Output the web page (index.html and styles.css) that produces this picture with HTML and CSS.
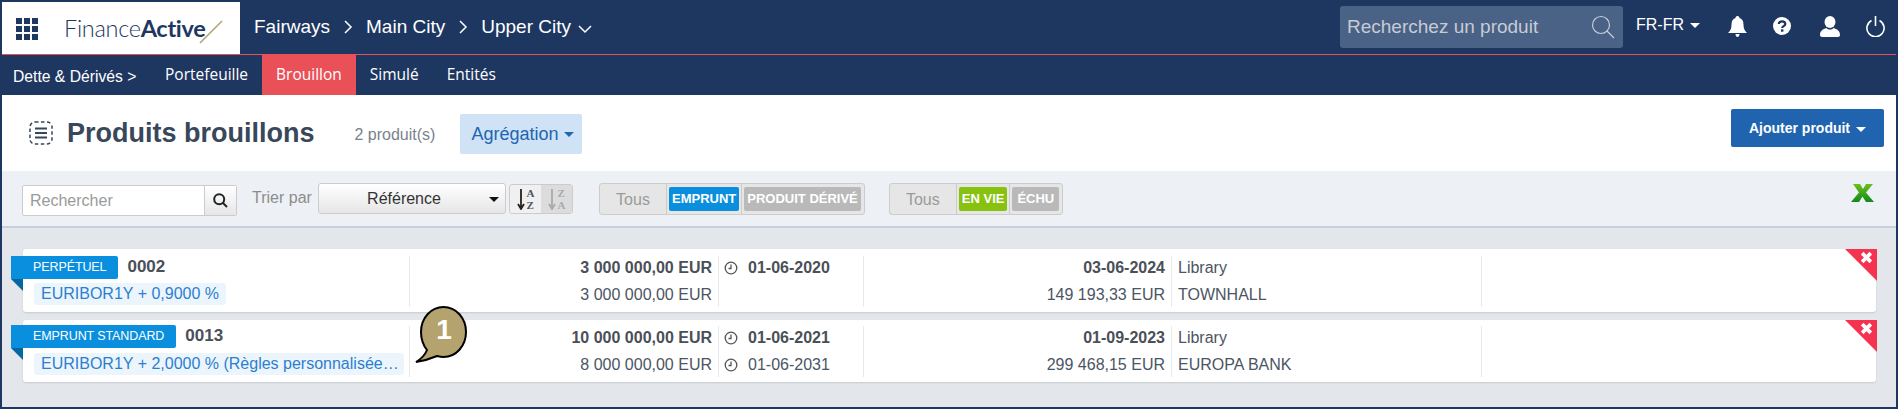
FILE: index.html
```html
<!DOCTYPE html>
<html lang="fr">

<head>
  <meta charset="UTF-8">
  <meta name="viewport" content="width=device-width, initial-scale=1.0">
  <title>Produits brouillons</title>

  <link rel="stylesheet" href="styles.css">
</head>

<body>
  <div class="page">
    <header class="topbar">
      <div class="brand">
        <svg class="apps" width="22" height="22" viewBox="0 0 22 22" fill="#1e3761">
          <rect x="0" y="0" width="6" height="6" /><rect x="8" y="0" width="6" height="6" /><rect x="16" y="0" width="6" height="6" />
          <rect x="0" y="8" width="6" height="6" /><rect x="8" y="8" width="6" height="6" /><rect x="16" y="8" width="6" height="6" />
          <rect x="0" y="16" width="6" height="6" /><rect x="8" y="16" width="6" height="6" /><rect x="16" y="16" width="6" height="6" />
        </svg>
        <span class="logo">Finance<b>Active</b></span>
        <svg class="slash" width="24" height="24" viewBox="0 0 24 24"><path d="M1 23 L23 1" stroke="#b3a273" stroke-width="1.6" /></svg>
      </div>

      <nav class="crumbs">
        <span>Fairways</span>
        <svg width="10" height="16" viewBox="0 0 10 16"><path d="M2 2 L8 8 L2 14" class="line" /></svg>
        <span>Main City</span>
        <svg width="10" height="16" viewBox="0 0 10 16"><path d="M2 2 L8 8 L2 14" class="line" /></svg>
        <span>Upper City</span>
        <svg class="down" width="16" height="10" viewBox="0 0 16 10"><path d="M2 2 L8 8 L14 2" class="line" /></svg>
      </nav>

      <div class="top-right">
        <div class="top-search">
          <span>Recherchez un produit</span>
          <svg width="24" height="24" viewBox="0 0 24 24" fill="none" stroke="#c4ccd8" stroke-width="1.2">
            <circle cx="10" cy="10" r="8.5" /><path d="M16 16 L23 23" />
          </svg>
        </div>
        <div class="lang">FR-FR<i class="caret"></i></div>
        <div class="top-icons">
          <svg width="19" height="21" viewBox="0 0 19 21" fill="#fff">
            <path d="M9.5 0 C11 0 11.5 1 11.5 2 C14.5 3 15.5 5.5 15.5 9 C15.5 13 17 15 19 17 L0 17 C2 15 3.5 13 3.5 9 C3.5 5.5 4.500 3 7.500 2 C7.500 1 8 0 9.500 0 Z" />
            <path d="M7.500 18 L11.500 18 C11.500 20 10.500 21 9.500 21 C8.500 21 7.500 20 7.500 18 Z" />
          </svg>
          <svg width="18" height="18" viewBox="0 0 18 18">
            <circle cx="9" cy="9" r="9" fill="#fff" />
            <path d="M5.800 7 C5.800 3.400 12.300 3.400 12.300 7 C12.300 9.300 9.200 9 9.200 11" fill="none" stroke="#1e3761" stroke-width="2.200" />
            <rect x="8" y="12.300" width="2.400" height="2.400" fill="#1e3761" />
          </svg>
          <svg width="20" height="21" viewBox="0 0 20 21" fill="#fff">
            <ellipse cx="10" cy="6" rx="5.500" ry="6" />
            <path d="M6.500 12 C8 14 12 14 13.500 12 C17 13 20 15 20 19 C20 20 19 21 18 21 L2 21 C1 21 0 20 0 19 C0 15 3 13 6.500 12 Z" />
          </svg>
          <svg width="19" height="21" viewBox="0 0 19 21" fill="none" stroke="#fff" stroke-width="1.600">
            <path d="M5.500 4.500 A8.600 8.600 0 1 0 13.500 4.500" /><path d="M9.500 0 L9.500 10" />
          </svg>
        </div>
      </div>
    </header>

    <nav class="subnav">
      <span class="subnav-title">Dette &amp; Dérivés &gt;</span>
      <a>Portefeuille</a>
      <a class="active">Brouillon</a>
      <a>Simulé</a>
      <a>Entités</a>
    </nav>

    <section class="heading">
      <svg class="draft" width="24" height="24" viewBox="0 0 24 24" fill="none" stroke="#39475a">
        <rect x="1" y="1" width="22" height="22" rx="5" stroke-width="1.500" stroke-dasharray="3.500 2.500" />
        <path d="M6 7.500 H18 M6 12 H18 M6 16.500 H18" stroke-width="2" />
      </svg>
      <h1>Produits brouillons</h1>
      <span class="count">2 produit(s)</span>
      <button class="aggregate">Agrégation<i class="caret"></i></button>
      <button class="add">Ajouter produit<i class="caret"></i></button>
    </section>

    <section class="toolbar">
      <div class="find">
        <span class="find-input">Rechercher</span>
        <span class="find-btn">
          <svg width="15" height="15" viewBox="0 0 15 15" fill="none" stroke="#222" stroke-width="2">
            <circle cx="6.200" cy="6.200" r="5" /><path d="M10 10 L14 14" />
          </svg>
        </span>
      </div>
      <span class="sort-label">Trier par</span>
      <div class="select">Référence<i class="caret dark"></i></div>
      <div class="sort-btns">
        <span class="sort">
          <svg width="8" height="22" viewBox="0 0 8 22"><path d="M4 1 V20 M1 16 L4 21 L7 16" fill="none" stroke="#222" stroke-width="1.800" /></svg>
          <span class="az"><span>A</span><span>Z</span></span>
        </span>
        <span class="sort off">
          <svg width="8" height="22" viewBox="0 0 8 22"><path d="M4 1 V20 M1 16 L4 21 L7 16" fill="none" stroke="#aaa" stroke-width="1.800" /></svg>
          <span class="az"><span>Z</span><span>A</span></span>
        </span>
      </div>
      <div class="filter first">
        <span class="all">Tous</span>
        <span class="opt"><b class="pill blue">EMPRUNT</b></span>
        <span class="opt"><b class="pill grey">PRODUIT DÉRIVÉ</b></span>
      </div>
      <div class="filter">
        <span class="all">Tous</span>
        <span class="opt"><b class="pill green">EN VIE</b></span>
        <span class="opt"><b class="pill grey echu">ÉCHU</b></span>
      </div>
      <svg class="excel" width="23" height="18" viewBox="0 0 23 18">
        <defs>
          <linearGradient id="xl" x1="0" y1="0" x2="0" y2="1">
            <stop offset="0" stop-color="#6cc11a" />
            <stop offset="1" stop-color="#0f8a1c" />
          </linearGradient>
        </defs>
        <path d="M2 0 H9 L12 5 L15 0 H22 L15 8.500 L23 18 H15 L11.500 12.500 L8 18 H0 L8 8.500 Z" fill="url(#xl)" />
      </svg>
    </section>

    <main class="list">
      <article class="card">
        <i class="remove"></i>
        <svg class="remove-x" width="13" height="13" viewBox="0 0 12 12"><path d="M2 2 L10 10 M10 2 L2 10" stroke="#fff" stroke-width="3.400" /></svg>
        <div class="col col-main">
          <div class="tag-row">
            <span class="tag">PERPÉTUEL</span>
            <strong class="ref">0002</strong>
          </div>
          <span class="rate">EURIBOR1Y + 0,9000 %</span>
        </div>
        <div class="col col-num">
          <strong>3 000 000,00 EUR</strong>
          <span>3 000 000,00 EUR</span>
        </div>
        <div class="col col-date">
          <strong class="date">
            <svg class="clock" width="14" height="14" viewBox="0 0 14 14"><circle cx="7" cy="7" r="5.800" /><path d="M7 3.500 V7.500 H4.500" /></svg>
            01-06-2020
          </strong>
        </div>
        <div class="col col-num">
          <strong>03-06-2024</strong>
          <span>149 193,33 EUR</span>
        </div>
        <div class="col col-text">
          <span>Library</span>
          <span>TOWNHALL</span>
        </div>
        <div class="col-last"></div>
      </article>

      <article class="card second">
        <i class="remove"></i>
        <svg class="remove-x" width="13" height="13" viewBox="0 0 12 12"><path d="M2 2 L10 10 M10 2 L2 10" stroke="#fff" stroke-width="3.400" /></svg>
        <div class="col col-main">
          <div class="tag-row">
            <span class="tag">EMPRUNT STANDARD</span>
            <strong class="ref">0013</strong>
          </div>
          <span class="rate long">EURIBOR1Y + 2,0000 % (Règles personnalisée…</span>
        </div>
        <div class="col col-num">
          <strong>10 000 000,00 EUR</strong>
          <span>8 000 000,00 EUR</span>
        </div>
        <div class="col col-date">
          <strong class="date">
            <svg class="clock" width="14" height="14" viewBox="0 0 14 14"><circle cx="7" cy="7" r="5.800" /><path d="M7 3.500 V7.500 H4.500" /></svg>
            01-06-2021
          </strong>
          <span class="date">
            <svg class="clock" width="14" height="14" viewBox="0 0 14 14"><circle cx="7" cy="7" r="5.800" /><path d="M7 3.500 V7.500 H4.500" /></svg>
            01-06-2031
          </span>
        </div>
        <div class="col col-num">
          <strong>01-09-2023</strong>
          <span>299 468,15 EUR</span>
        </div>
        <div class="col col-text">
          <span>Library</span>
          <span>EUROPA BANK</span>
        </div>
        <div class="col-last"></div>

        <!-- annotation bubble over the row -->
        <div class="bubble">
          <svg width="56" height="62" viewBox="0 0 56 62">
            <path d="M29.500 2 C42 2 52 13 52 27 C52 41 42 52 29.500 52 C27 52 25 51.500 23 51 C16 54 9 56 2 57 C7 54 11 50 13 45 C9 40 7 34 7 27 C7 13 17 2 29.500 2 Z" fill="#b5a36f" stroke="#000" stroke-width="2" />
          </svg>
          <span>1</span>
        </div>
      </article>
    </main>
  </div>
</body>

</html>
```

FILE: styles.css
```css
* {
  margin: 0;
  padding: 0;
  box-sizing: border-box;
}

body {
  font-family: "Liberation Sans", Arial, sans-serif;
  color: #4b5563;
}

.page {
  width: 1898px;
  height: 409px;
  overflow: hidden;
  border: 2px solid #1e3761;
  display: flex;
  flex-direction: column;
  background: #e3e6ea;
}

.line {
  fill: none;
  stroke: #fff;
  stroke-width: 1.5;
}

.caret {
  display: inline-block;
  width: 0;
  height: 0;
  border-left: 5px solid transparent;
  border-right: 5px solid transparent;
  border-top: 5px solid currentColor;
  margin-left: 6px;
  vertical-align: middle;
}

/* top bar */
.topbar {
  height: 52px;
  flex: none;
  display: flex;
  align-items: stretch;
  background: #1e3761;
  border-bottom: 1px solid #e9505a;
  box-sizing: content-box;
}

.brand {
  width: 238px;
  background: #fff;
  display: flex;
  align-items: center;
  padding-left: 14px;
}

.apps {
  margin-right: 26px;
  margin-top: 1px;
}

.logo {
  font-family: Lato, sans-serif;
  font-weight: 300;
  font-size: 23.500px;
  letter-spacing: -0.3px;
  color: #1e3761;
}

.logo b {
  font-weight: 700;
}

.slash {
  margin-left: -6px;
  margin-top: 8px;
}

.crumbs {
  display: flex;
  align-items: center;
  gap: 13px;
  margin-left: 14px;
  color: #fff;
  font-size: 19px;
  padding-bottom: 2px;
}

.crumbs .down {
  margin-left: -7px;
  margin-top: 3px;
}

.top-right {
  margin-left: auto;
  display: flex;
  align-items: center;
  padding-right: 11px;
}

.top-search {
  align-self: flex-start;
  width: 283px;
  height: 42px;
  margin-top: 4px;
  padding: 0 8px 0 7px;
  background: #4a6285;
  border-radius: 3px;
  color: #c6ccd6;
  font-size: 19px;
  display: flex;
  align-items: center;
  justify-content: space-between;
}

.lang {
  margin-left: 13px;
  color: #fff;
  font-size: 16px;
  width: 92px;
  margin-top: -6px;
}

.top-icons {
  display: flex;
  align-items: center;
  gap: 26px;
  margin-top: -4px;
}

.top-icons svg:nth-child(2) {
  margin-right: 3px;
}

/* second row */
.subnav {
  height: 40px;
  flex: none;
  display: flex;
  align-items: stretch;
  background: #1e3761;
  color: #fff;
  font-size: 15.500px;
  font-family: "Open Sans", sans-serif;
}

.subnav-title {
  width: 149px;
  padding-left: 11px;
  line-height: 44px;
  font-size: 15.700px;
  font-family: "Liberation Sans", sans-serif;
}

.subnav a {
  padding: 0 14px;
  line-height: 39px;
}

.subnav a.active {
  background: #ea5058;
}

/* page heading */
.heading {
  height: 76px;
  flex: none;
  background: #fff;
  display: flex;
  align-items: center;
  padding: 0 12px 0 27px;
}

.draft {
  margin-right: 14px;
  margin-top: -1px;
}

h1 {
  font-size: 27px;
  color: #39475a;
}

.count {
  margin-left: 40px;
  font-size: 16px;
  color: #7a828c;
  margin-top: 3px;
}

.aggregate {
  margin-left: 25px;
  width: 122px;
  height: 40px;
  margin-top: 2px;
  padding-left: 3px;
  border: none;
  border-radius: 2px;
  background: #d0e2f6;
  color: #2166b1;
  font: 18px "Liberation Sans", sans-serif;
}

.add {
  margin-left: auto;
  width: 153px;
  height: 38px;
  margin-top: -10px;
  border: none;
  border-radius: 2px;
  background: #2064b0;
  color: #fff;
  font: bold 14px "Liberation Sans", sans-serif;
}

/* filters */
.toolbar {
  height: 57px;
  flex: none;
  background: #edf1f6;
  border-bottom: 2px solid #c7d0da;
  display: flex;
  align-items: center;
  padding: 0 0 2px 20px;
}

.find {
  display: flex;
  width: 215px;
  height: 31px;
  margin-top: 6px;
  border: 1px solid #ccc;
  border-radius: 2px;
  background: #fff;
}

.find-input {
  flex: 1;
  padding-left: 7px;
  font-size: 16px;
  line-height: 30px;
  color: #9a9a9a;
}

.find-btn {
  width: 32px;
  background: linear-gradient(#fff, #e6e6e6);
  border-left: 1px solid #ccc;
  display: flex;
  align-items: center;
  justify-content: center;
}

.sort-label {
  margin-left: 15px;
  font-size: 16px;
  color: #8c8c8c;
  width: 66px;
  margin-top: 1px;
}

.select {
  position: relative;
  width: 188px;
  height: 31px;
  margin-top: 2px;
  border: 1px solid #ccc;
  border-radius: 3px;
  background: linear-gradient(#fff, #e6e6e6);
  font-size: 16px;
  line-height: 29px;
  color: #333;
  padding-right: 16px;
  display: flex;
  align-items: center;
  justify-content: center;
}

.caret.dark {
  color: #111;
  position: absolute;
  right: 6px;
  top: 13px;
}

.sort-btns {
  display: flex;
  margin-left: 3px;
  margin-top: 3px;
  height: 30px;
  border: 1px solid #ccc;
  border-radius: 3px;
  background: #f0f0f0;
}

.sort {
  width: 31px;
  display: flex;
  align-items: center;
  justify-content: center;
  gap: 2px;
}

.sort.off {
  background: #dcdcdc;
  color: #aaa;
}

.az {
  display: flex;
  flex-direction: column;
  font: bold 11px/12px "Liberation Serif", serif;
}

.filter {
  display: flex;
  height: 32px;
  margin-left: 24px;
  margin-top: 3px;
  border: 1px solid #ccc;
  border-radius: 3px;
  background: #e6e6e6;
}

.filter.first {
  margin-left: 26px;
}

.all {
  width: 67px;
  text-align: center;
  font-size: 16px;
  line-height: 31px;
  color: #9a9a9a;
  border-right: 1px solid #ccc;
}

.opt {
  padding: 3px 2px;
  border-right: 1px solid #ccc;
  display: flex;
}

.opt:last-child {
  border-right: none;
  padding-right: 3px;
}

.pill {
  padding: 0 3px;
  height: 24px;
  border-radius: 2px;
  font-size: 13px;
  line-height: 23px;
  color: #fff;
}

.pill.echu {
  padding: 0 5px;
}

.pill.blue {
  background: #0a8fdf;
}

.pill.grey {
  background: #b9b9b9;
}

.pill.green {
  background: #88c211;
}

.excel {
  margin-left: auto;
  margin-right: 22px;
  margin-top: -10px;
}

/* cards */
.list {
  flex: 1;
  padding: 21px 20px 0 21px;
  display: flex;
  flex-direction: column;
  gap: 8px;
}

.card {
  position: relative;
  height: 63px;
  background: #fff;
  border-radius: 3px;
  box-shadow: 0 1px 2px rgba(0, 0, 0, .12);
  display: grid;
  grid-template-columns: 387px 309px 145px 308px 310px 1fr;
  padding-top: 7px;
  font-size: 16px;
  color: #4b5563;
}

.card.second {
  height: 62px;
  padding-top: 6px;
}

.second .tag-row {
  margin-top: -1px;
  margin-bottom: 1px;
}

.col {
  border-right: 1px solid #e8eaec;
  display: flex;
  flex-direction: column;
  height: 51px;
}

.col strong {
  line-height: 24px;
  color: #4a4f58;
}

.col > span {
  line-height: 30px;
}

.col-main {
  padding-right: 5px;
}

.col-num {
  text-align: right;
  padding-right: 6px;
}

.col-date {
  padding-left: 5px;
}

.col-text {
  padding-left: 6px;
}

.col-text span:first-child {
  line-height: 24px;
}

.date {
  display: flex;
  align-items: center;
  gap: 10px;
}

.clock {
  fill: none;
  stroke: #555;
  stroke-width: 1.300;
  flex: none;
}

.tag-row {
  display: flex;
  align-items: flex-start;
  margin-left: -12px;
}

.tag {
  position: relative;
  height: 23px;
  padding: 0 12px 0 22px;
  background: #0a8fdf;
  border-radius: 0 2px 2px 0;
  color: #fff;
  font-size: 12.500px;
  letter-spacing: -0.1px;
  line-height: 22px;
}

.tag::after {
  content: "";
  position: absolute;
  left: 0;
  top: 23px;
  border-top: 12px solid #05679f;
  border-left: 12px solid transparent;
}

.ref {
  margin-left: 9px;
  margin-top: -1px;
  font-size: 17px;
}

.col .rate {
  align-self: flex-start;
  margin: 4px 0 0 11px;
  padding: 0 7px;
  height: 22px;
  line-height: 22px;
  border-radius: 3px;
  background: #edf5fc;
  color: #2a7fd0;
  white-space: nowrap;
}

.col .rate.long {
  width: 370px;
  padding-right: 0;
}

.remove {
  position: absolute;
  right: -1px;
  top: 0;
  width: 32px;
  height: 32px;
  background: #f5324f;
  clip-path: polygon(0 0, 100% 0, 100% 100%);
}

.remove-x {
  position: absolute;
  right: 3px;
  top: 2px;
}

.bubble {
  position: absolute;
  left: 391px;
  top: -15px;
  width: 56px;
  height: 62px;
}

.bubble span {
  position: absolute;
  left: 18px;
  top: 9px;
  width: 24px;
  text-align: center;
  font-size: 28px;
  font-weight: bold;
  color: #fff;
}
```
